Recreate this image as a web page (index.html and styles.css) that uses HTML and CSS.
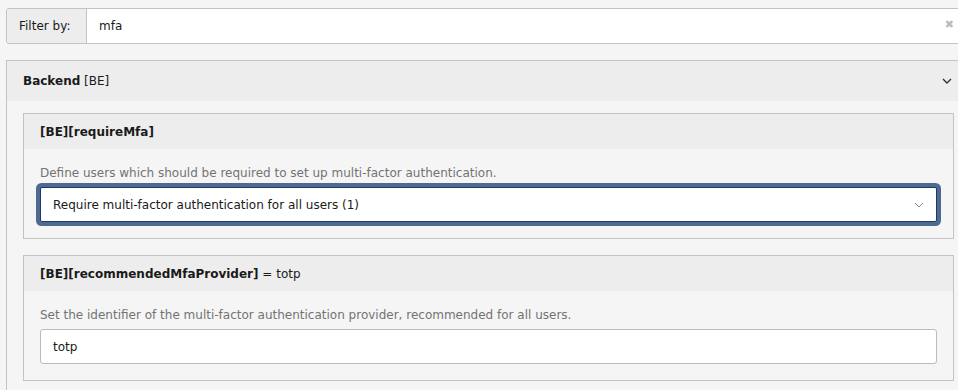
FILE: index.html
```html
<!DOCTYPE html>
<html lang="en">
<head>
  <meta charset="UTF-8" />
  <title>Configure Installation-Wide Options</title>
  <link rel="stylesheet" href="styles.css">
</head>
<body>

  <div class="page">
    <div class="filter">
      <span class="filter-label">Filter by:</span>
      <div class="filter-field">
        <input type="text" value="mfa" />
        <span class="filter-clear">&#x2716;</span>
      </div>
    </div>

    <div class="panel">
      <div class="panel-heading">
        <span><strong>Backend</strong> [BE]</span>
        <svg class="chevron" width="10" height="6" viewBox="0 0 10 6">
          <path d="M1 1l4 4 4-4" fill="none" stroke="#333" stroke-width="1.4" />
        </svg>
      </div>
      <div class="panel-body">

        <div class="panel inner">
          <div class="panel-heading">
            <span><strong>[BE][requireMfa]</strong></span>
          </div>
          <div class="panel-body">
            <p class="description">Define users which should be required to set up multi-factor authentication.</p>
            <div class="select is-focused">
              <span>Require multi-factor authentication for all users (1)</span>
              <svg width="10" height="6" viewBox="0 0 10 6">
                <path d="M1 1l4 4 4-4" fill="none" stroke="#888" stroke-width="1" />
              </svg>
            </div>
          </div>
        </div>

        <div class="panel inner">
          <div class="panel-heading">
            <span><strong>[BE][recommendedMfaProvider]</strong> = totp</span>
          </div>
          <div class="panel-body">
            <p class="description">Set the identifier of the multi-factor authentication provider, recommended for all users.</p>
            <input class="text-field" type="text" value="totp" />
          </div>
        </div>

      </div>
    </div>
  </div>

</body>
</html>
```

FILE: styles.css
```css
html {
  overflow: hidden;
}

body {
  font-family: Verdana, "DejaVu Sans", sans-serif;
  font-size: 12px;
  color: #1a1a1a;
  background-color: #f5f5f5;
  margin: 0;
  padding: 8px 0 0 6px;
}

.page {
  width: 965px;
}

/* filter bar */
.filter {
  display: flex;
  height: 36px;
  border: 1px solid #c3c3c3;
  border-radius: 3px;
  background: #fff;
  box-sizing: border-box;
  margin-bottom: 16px;
}

.filter-label {
  width: 80px;
  box-sizing: border-box;
  padding: 0 12px;
  display: flex;
  align-items: center;
  background-color: #ededed;
  border-right: 1px solid #c3c3c3;
  border-radius: 3px 0 0 3px;
}

.filter-field {
  flex: 1;
  display: flex;
  align-items: center;
  position: relative;
}

.filter-field input {
  flex: 1;
  border: none;
  outline: none;
  background: transparent;
  font: inherit;
  color: inherit;
  padding: 0 12px;
}

.filter-clear {
  position: absolute;
  right: 16px;
  top: 9px;
  color: #bbb;
  font-size: 11px;
}

/* panels */
.panel {
  border: 1px solid #c3c3c3;
  background-color: #f5f5f5;
}

.panel-heading {
  height: 40px;
  padding: 0 16px;
  display: flex;
  align-items: center;
  justify-content: space-between;
  background-color: #ededed;
}

.panel-heading .chevron {
  margin-right: 2px;
}

.panel-body {
  padding: 12px 16px 16px;
}

.panel.inner {
  margin-bottom: 16px;
}

.panel.inner .panel-heading {
  height: 35px;
}

.panel.inner .panel-body {
  padding: 15px 16px 16px;
}

.description {
  margin: 0 0 5px;
  line-height: 18px;
  color: #737373;
}

.select,
.text-field {
  display: flex;
  align-items: center;
  justify-content: space-between;
  width: 100%;
  height: 35px;
  box-sizing: border-box;
  padding: 0 12px;
  background: #fff;
  border: 1px solid #bbb;
  border-radius: 3px;
  font: inherit;
  color: inherit;
}

.select.is-focused {
  border-color: #1c3a66;
  box-shadow: 0 0 0 4px #4e6a91;
  border-radius: 2px;
}

.text-field {
  outline: none;
}
```
